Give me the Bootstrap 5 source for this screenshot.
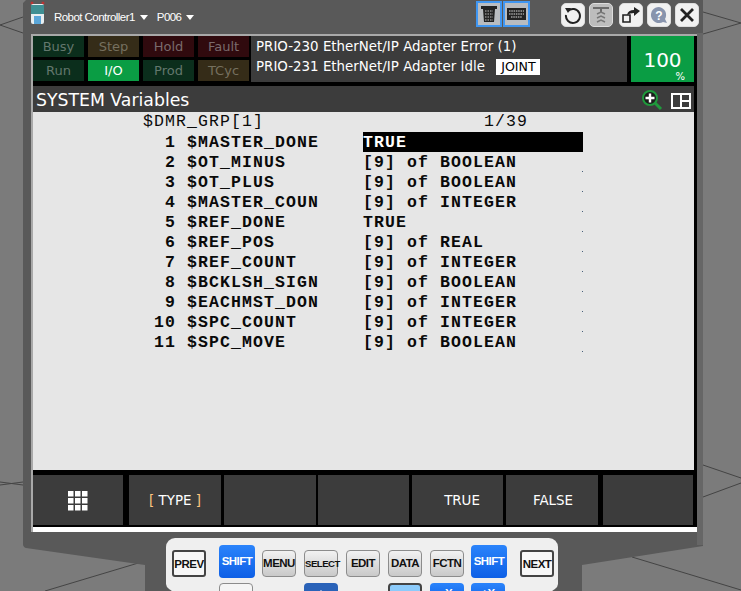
<!DOCTYPE html>
<html lang="en">
<head>
  <meta charset="UTF-8" />
  <meta name="viewport" content="width=device-width, initial-scale=1" />
  <title>SYSTEM Variables</title>
  <link rel="stylesheet" href="https://cdn.jsdelivr.net/npm/bootstrap@5.3.0/dist/css/bootstrap.min.css" />
  <style>
    html, body { height: 591px; overflow: hidden; }
    body { position: relative; background: #7b7b7b; font-family: "DejaVu Sans", sans-serif; }
    .scene { position: absolute; left: 0; top: 0; }
    .frame { position: relative; width: 680px; margin-left: 23px; }

    /* top bar */
    .topbar { height: 34px; padding-right: 4px; color: #fff; font: 11.5px "Liberation Sans", sans-serif; letter-spacing: -.55px; white-space: nowrap; }
    .pendant { margin: 1px 9px 0 7px; align-self: flex-start; }
    .caret-down { width: 0; height: 0; border: 4px solid transparent; border-top: 5px solid #fff; border-bottom: 0; margin: 0 9px 0 5px; }
    .tool-group { margin-left: 31px; gap: 4px; margin-top: 3px; }
    .toggle-group { margin-top: 1px; gap: 1px; }
    .tool { width: 24px; height: 24px; background: #f1f1f1; border-radius: 5px; border: 1px solid #ddd; padding: 0; }
    .tool-off { background: #bdbdbd; }
    .tool-gap { margin-left: 2px; }
    .toggle { width: 26px; height: 26px; background: #b9bcc0; border: 2px solid #3f96f2; padding: 0; }
    .toggle-wide { width: 27px; }

    /* screen */
    .screen { width: 666px; margin-left: 8px; height: 498px; background: #000; border-top: 2px solid #a9a9a9; border-left: 2px solid #a9a9a9; padding-right: 3px; }
    .status { height: 46px; }
    .lamps { width: 218px; gap: 2px 4px; display: grid; grid-template-columns: repeat(4, 51px); font-size: 13px; }
    .lamp { height: 21px; line-height: 21px; text-align: center; }
    .lamp-green { background: #0b2e1c; color: #63776d; }
    .lamp-amber { background: #352c18; color: #75705f; }
    .lamp-red { background: #300a0e; color: #7a6a6c; }
    .lamp-on { background: #0a9d44; color: #fff; }
    .messages { width: 376px; background: #3c3c3c; color: #fff; font-size: 13.4px; padding: 1px 0 0 5px; line-height: 20px; white-space: nowrap; }
    .mode-box { background: #fff; color: #000; padding-left: 5px; margin-left: 7px; display: inline-block; line-height: 16px; width: 44px; font-size: 12.6px; }
    .override { width: 63px; margin-left: 4px; background: #0a9d44; color: #fff; position: relative; font-size: 20px; text-align: center; padding-top: 12px; line-height: 24px; }
    .override small { position: absolute; right: 9px; bottom: 0; font-size: 10px; line-height: 10px; }
    .titlebar { height: 26px; margin-top: 4px; background: #3c3c3c; color: #fff; font-size: 17.3px; padding: 3px 3px 0 3px; }
    .content { height: 358px; background: #e6e6e6; font: bold 16.5px "Liberation Mono", monospace; letter-spacing: 1.1px; color: #0a0a0a; }
    .var-row { height: 20px; line-height: 21px; }
    .var-head { height: 20px; line-height: 20px; font-weight: normal; }
    .var-num { width: 143px; text-align: right; }
    .var-name { width: 176px; margin-left: 11px; }
    .var-val { width: 220px; position: relative; }
    .var-dot::after { content: ""; position: absolute; right: 0; bottom: 0; width: 1px; height: 1px; background: #47607a; }
    .var-sel { background: #000; color: #fff; }
    .fkeys { padding: 5px 0 2px; height: 57px; }
    .fkey { height: 50px; background: #3c3c3c; color: #fff; font-size: 13.4px; border: 0; border-radius: 0; padding: 2px 0 0; }
    .fkey:hover { background: #3c3c3c; color: #fff; }
    .fkey-white { height: 5px; background: #fff; margin-right: -3px; }
    .bracket { color: #ffc680; }

    /* keypad */
    .keypad { position: absolute; left: 166px; top: 538px; width: 392px; height: 60px; background: #efefef; border-radius: 9px 9px 44px 44px / 9px 9px 14px 14px; }
    .key { position: absolute; width: 34px; height: 27px; top: 12px; border: 1px solid #8c8c8c; border-radius: 4px; background: linear-gradient(#f2f2f2, #c9c9c9); color: #111; font: bold 11.5px/25px "Liberation Sans", sans-serif; text-align: center; letter-spacing: -.5px; padding: 0; }
    .key-side { border: 2px solid #444; background: #f7f7f7; border-radius: 3px; line-height: 25px; }
    .key-tiny { font-size: 9.6px; }
    .key-blue { width: 36px; height: 33px; top: 7px; line-height: 31px; background: linear-gradient(#2b84fb, #0d5fe6); border: 0; color: #fff; }
    .key-low { top: 45px; height: 20px; line-height: 14px; width: 34px; }
    .key-disk { background: #f5f5f5; }
    .key-screen { background: #8ccbfb; border: 2px solid #444; }
    .key-up { background: #2a62b8; }
    .key-glyph { display: block; margin: 1px auto 0; }
  </style>
</head>
<body>
  <!-- backdrop and body of the pendant -->
  <svg class="scene" width="741" height="591" viewBox="0 0 741 591">
    <g stroke="#444" fill="none">
      <path d="M0 25 L23 17 M0 25 L23 33 M0 482 L23 485 M0 485 L23 482 M45 591 L145 561"/>
      <path d="M703 12 L741 23 L703 34 M703 465 L741 478 M703 497 L741 483 M632 557 L741 590"/>
    </g>
    <path d="M26 0 H703 V546 L582 565 V591 H145 V565 L26 548 Q23 547 23 544 V3 Z" fill="#595959"/>
    <rect x="697" y="33" width="6" height="512" fill="#666"/>
  </svg>

  <div class="frame">
    <div class="topbar d-flex align-items-center">
      <svg class="pendant" width="15" height="24" viewBox="0 0 15 24">
        <circle cx="2" cy="2" r="1.500" fill="#b33"/><circle cx="13" cy="2" r="1.500" fill="#b33"/>
        <rect x="1" y="3" width="13" height="20" rx="2" fill="#e8eef0"/>
        <rect x="1" y="4" width="13" height="9" fill="#3f8f93"/>
        <rect x="4" y="15" width="7" height="8" fill="#5aa6d8"/>
      </svg>
      <span>Robot Controller1</span><span class="caret-down"></span>
      <span>P006</span><span class="caret-down"></span>
      <div class="toggle-group d-flex align-self-start ms-auto">
        <button class="toggle d-flex align-items-center justify-content-center" aria-label="Tablet">
          <svg width="18" height="18" viewBox="0 0 18 18"><path d="M1 1H17V4H15L14 17H4L3 4H1Z" fill="#222"/><path d="M5 6H13M5 9H13M5 12H13M5 15H13" stroke="#bbb" stroke-dasharray="1.500 1"/></svg>
        </button>
        <button class="toggle toggle-wide d-flex align-items-center justify-content-center" aria-label="Keyboard">
          <svg width="19" height="12" viewBox="0 0 19 12"><rect width="19" height="12" fill="#222"/><path d="M2 3H17M2 6H17M4 9H15" stroke="#ddd" stroke-dasharray="1.500 .8"/></svg>
        </button>
      </div>
      <div class="tool-group d-flex align-self-start">
        <button class="tool d-flex align-items-center justify-content-center" aria-label="Reload">
          <svg width="18" height="18" viewBox="0 0 18 18"><path d="M4 5A7 7 0 1 1 2 9" fill="none" stroke="#222" stroke-width="2"/><path d="M1 2L7 2L4 7Z" fill="#222"/></svg>
        </button>
        <button class="tool tool-off d-flex align-items-center justify-content-center" aria-label="Robot">
          <svg width="18" height="20" viewBox="0 0 18 20"><path d="M1 2H17V4H10V8H8V4H1Z" fill="#6b6b6b"/><path d="M5 9L9 7L13 9M5 13L9 11L13 13M5 17L9 15L13 17" fill="none" stroke="#777" stroke-width="1.500"/></svg>
        </button>
        <button class="tool tool-gap d-flex align-items-center justify-content-center" aria-label="Share">
          <svg width="20" height="18" viewBox="0 0 20 18"><path d="M2 9H9V16H2Z" fill="none" stroke="#222" stroke-width="1.600"/><path d="M6 9Q7 4 13 4V1L19 5L13 10V7Q9 7 6 9Z" fill="#222"/></svg>
        </button>
        <button class="tool d-flex align-items-center justify-content-center" aria-label="Help">
          <svg width="18" height="18" viewBox="0 0 18 18"><path d="M9 1A8 8 0 1 0 13 15.900L17 17L15 13A8 8 0 0 0 9 1Z" fill="#8894ad"/><text x="9" y="13.500" text-anchor="middle" font-family="Liberation Sans" font-weight="bold" font-size="12" fill="#fff">?</text></svg>
        </button>
        <button class="tool d-flex align-items-center justify-content-center" aria-label="Close">
          <svg width="14" height="14" viewBox="0 0 14 14"><path d="M1 1L13 13M13 1L1 13" stroke="#222" stroke-width="2.800"/></svg>
        </button>
      </div>
    </div>

    <div class="screen">
      <div class="status d-flex">
        <div class="lamps">
          <div class="lamp lamp-green">Busy</div>
          <div class="lamp lamp-amber">Step</div>
          <div class="lamp lamp-red">Hold</div>
          <div class="lamp lamp-red">Fault</div>
          <div class="lamp lamp-green">Run</div>
          <div class="lamp lamp-on">I/O</div>
          <div class="lamp lamp-green">Prod</div>
          <div class="lamp lamp-amber">TCyc</div>
        </div>
        <div class="messages">
          <div>PRIO-230 EtherNet/IP Adapter Error (1)</div>
          <div>PRIO-231 EtherNet/IP Adapter Idle <span class="mode-box">JOINT</span></div>
        </div>
        <div class="override">100<small>%</small></div>
      </div>

      <div class="titlebar d-flex align-items-center justify-content-between">
        <span>SYSTEM Variables</span>
        <div class="d-flex align-items-center gap-2">
          <svg width="21" height="21" viewBox="0 0 21 21"><circle cx="8" cy="8" r="7" fill="#1b1b1b" stroke="#1f9a3c" stroke-width="2"/><path d="M8 3.500V12.500M3.500 8H12.500" stroke="#fff" stroke-width="2.400"/><path d="M13 13L19 19" stroke="#1f9a3c" stroke-width="3"/></svg>
          <svg width="20" height="16" viewBox="0 0 20 16"><path d="M1 1H19V15H1ZM10 1V15M10 8H19" fill="none" stroke="#fff" stroke-width="2"/></svg>
        </div>
      </div>

      <div class="content">
        <div class="var-head d-flex">
          <span style="margin-left:110px;width:341px">$DMR_GRP[1]</span><span>1/39</span>
        </div>
        <div class="var-row d-flex"><span class="var-num">1</span><span class="var-name">$MASTER_DONE</span><span class="var-val var-sel">TRUE</span></div>
        <div class="var-row d-flex"><span class="var-num">2</span><span class="var-name">$OT_MINUS</span><span class="var-val var-dot">[9] of BOOLEAN</span></div>
        <div class="var-row d-flex"><span class="var-num">3</span><span class="var-name">$OT_PLUS</span><span class="var-val var-dot">[9] of BOOLEAN</span></div>
        <div class="var-row d-flex"><span class="var-num">4</span><span class="var-name">$MASTER_COUN</span><span class="var-val var-dot">[9] of INTEGER</span></div>
        <div class="var-row d-flex"><span class="var-num">5</span><span class="var-name">$REF_DONE</span><span class="var-val var-dot">TRUE</span></div>
        <div class="var-row d-flex"><span class="var-num">6</span><span class="var-name">$REF_POS</span><span class="var-val var-dot">[9] of REAL</span></div>
        <div class="var-row d-flex"><span class="var-num">7</span><span class="var-name">$REF_COUNT</span><span class="var-val var-dot">[9] of INTEGER</span></div>
        <div class="var-row d-flex"><span class="var-num">8</span><span class="var-name">$BCKLSH_SIGN</span><span class="var-val var-dot">[9] of BOOLEAN</span></div>
        <div class="var-row d-flex"><span class="var-num">9</span><span class="var-name">$EACHMST_DON</span><span class="var-val var-dot">[9] of INTEGER</span></div>
        <div class="var-row d-flex"><span class="var-num">10</span><span class="var-name">$SPC_COUNT</span><span class="var-val var-dot">[9] of INTEGER</span></div>
        <div class="var-row d-flex"><span class="var-num">11</span><span class="var-name">$SPC_MOVE</span><span class="var-val var-dot">[9] of BOOLEAN</span></div>
      </div>

      <div class="fkeys d-flex">
        <button class="fkey btn d-flex align-items-center justify-content-center" style="width:90px" aria-label="Menu">
          <svg width="20" height="20" viewBox="0 0 20 20" fill="#fff"><rect width="5.500" height="5.500"/><rect x="7" width="5.500" height="5.500"/><rect x="14" width="5.500" height="5.500"/><rect y="7" width="5.500" height="5.500"/><rect x="7" y="7" width="5.500" height="5.500"/><rect x="14" y="7" width="5.500" height="5.500"/><rect y="14" width="5.500" height="5.500"/><rect x="7" y="14" width="5.500" height="5.500"/><rect x="14" y="14" width="5.500" height="5.500"/></svg>
        </button>
        <button class="fkey btn" style="width:92px;margin-left:6px"><span class="bracket">[</span> TYPE <span class="bracket">]</span></button>
        <button class="fkey btn" style="width:92px;margin-left:3px"></button>
        <button class="fkey btn" style="width:91px;margin-left:2px"></button>
        <button class="fkey btn" style="width:91px;margin-left:3px;padding-left:9px">TRUE</button>
        <button class="fkey btn" style="width:92px;margin-left:3px;padding-left:2px">FALSE</button>
        <button class="fkey btn" style="width:90px;margin-left:5px"></button>
      </div>
      <div class="fkey-white"></div>
    </div>
  </div>

  <!-- keypad sits over the pendant body -->
  <div class="keypad">
    <button class="key key-side" style="left:6px">PREV</button>
    <button class="key key-blue" style="left:53px">SHIFT</button>
    <button class="key" style="left:96px">MENU</button>
    <button class="key key-tiny" style="left:138px">SELECT</button>
    <button class="key" style="left:180px">EDIT</button>
    <button class="key" style="left:222px">DATA</button>
    <button class="key" style="left:264px">FCTN</button>
    <button class="key key-blue" style="left:305px">SHIFT</button>
    <button class="key key-side" style="left:354px">NEXT</button>
    <button class="key key-low key-disk" style="left:53px" aria-label="Disk">
      <svg class="key-glyph" width="20" height="6" viewBox="0 0 20 6"><path d="M3 6Q10 -1 17 6" fill="none" stroke="#777"/></svg>
    </button>
    <button class="key key-low key-blue key-up" style="left:138px" aria-label="Up">
      <svg class="key-glyph" width="14" height="8" viewBox="0 0 14 8"><path d="M7 0L14 8H0Z" fill="#fff"/></svg>
    </button>
    <button class="key key-low key-screen" style="left:222px" aria-label="Screen"></button>
    <button class="key key-low key-blue" style="left:264px">-X</button>
    <button class="key key-low key-blue" style="left:305px">+X</button>
  </div>

  <script src="https://cdn.jsdelivr.net/npm/bootstrap@5.3.0/dist/js/bootstrap.bundle.min.js"></script>
</body>
</html>
